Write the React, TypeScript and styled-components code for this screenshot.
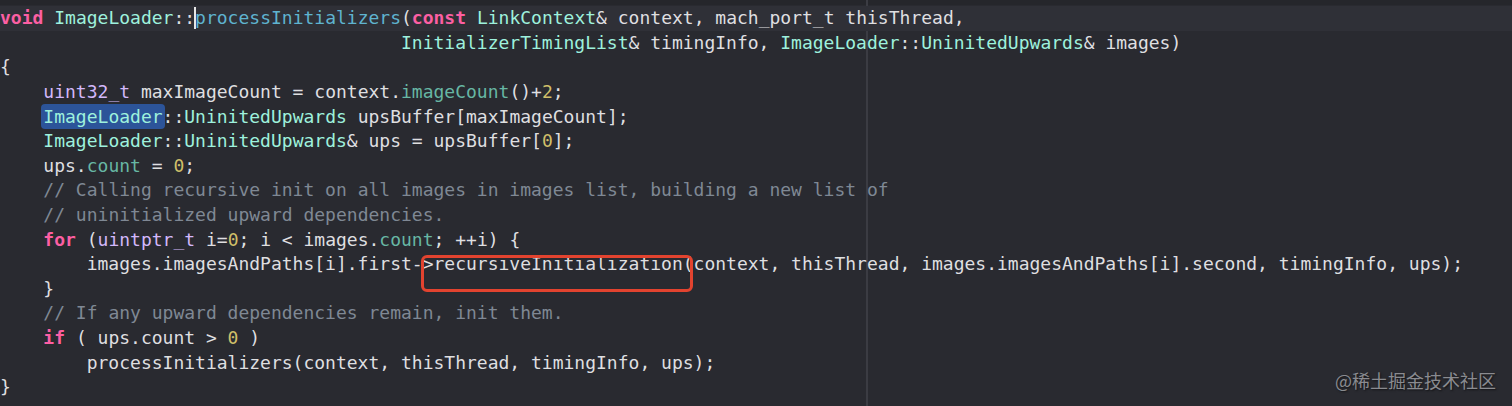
import React from "react";
import styled, { createGlobalStyle } from "styled-components";

const Global = createGlobalStyle`
  html, body { margin: 0; padding: 0; background: #292a30; }
  #root { width: 1512px; height: 406px; }
`;

const Editor = styled.div`
  position: relative;
  display: flex;
  flex-direction: column;
  width: 1512px;
  height: 406px;
  overflow: hidden;
  background: #292a30;
  padding-top: 6.3px;
  box-sizing: border-box;
  font-family: "DejaVu Sans Mono", "Liberation Mono", monospace;
  font-size: 18px;
  color: #dfdfe0;
  &::before {
    content: "";
    position: absolute;
    left: 0;
    right: 0;
    top: 0;
    height: 5px;
    background: #25262b;
  }
`;

const Guide = styled.div`
  position: absolute;
  top: 0;
  bottom: 0;
  left: calc(80ch - 1px);
  width: 2px;
  background: #3b3c43;
  pointer-events: none;
`;

const Line = styled.div<{ $current?: boolean }>`
  position: relative;
  flex: 0 0 24.6px;
  line-height: 24.6px;
  white-space: pre;
  background: ${(p) => (p.$current ? "#2f3037" : "transparent")};
`;

type Kind = "p" | "kw" | "ty" | "decl" | "mem" | "ot" | "num" | "cm";

const colors: Record<Kind, string> = {
  p: "#dfdfe0",
  kw: "#fc5fa3",
  ty: "#9ef1dd",
  decl: "#5fb4d0",
  mem: "#67b7a4",
  ot: "#d3b8fb",
  num: "#d0bf69",
  cm: "#7f8894",
};

const Tok = styled.span<{ $k: Kind }>`
  color: ${(p) => colors[p.$k]};
  font-weight: ${(p) => (p.$k === "kw" ? 700 : 400)};
`;

const Selection = styled.span`
  background: #2c5499;
  border-radius: 4px;
  padding: 2px 2px;
  margin: 0 -2px;
`;

const Caret = styled.span`
  display: inline-block;
  width: 0;
  height: 22px;
  border-left: 2px solid #e6e6e6;
  margin-left: -1px;
  margin-right: -1px;
  vertical-align: -5px;
`;

const Annotation = styled.span`
  position: absolute;
  left: calc(39ch - 2px);
  top: 2.5px;
  width: 272px;
  height: 37px;
  border: 3px solid #e2432f;
  border-radius: 6px;
  box-sizing: border-box;
  pointer-events: none;
`;

const Watermark = styled.div`
  position: absolute;
  right: 16px;
  bottom: 13px;
  font-family: "Noto Sans CJK SC", "Noto Sans", sans-serif;
  font-size: 18px;
  color: #8a8b90;
  text-shadow: 1px 1px 2px rgba(0, 0, 0, 0.6);
`;

type T = [Kind, string];

const lines: T[][] = [
  [["kw", "void"], ["p", " "], ["ty", "ImageLoader"], ["p", "::"], ["decl", "processInitializers"], ["p", "("], ["kw", "const"], ["p", " "], ["ty", "LinkContext"], ["p", "& context, mach_port_t thisThread,"]],
  [["p", "                                     "], ["ty", "InitializerTimingList"], ["p", "& timingInfo, "], ["ty", "ImageLoader"], ["p", "::"], ["ty", "UninitedUpwards"], ["p", "& images)"]],
  [["p", "{"]],
  [["p", "    "], ["ot", "uint32_t"], ["p", " maxImageCount = context."], ["mem", "imageCount"], ["p", "()+"], ["num", "2"], ["p", ";"]],
  [["p", "    "], ["ty", "ImageLoader"], ["p", "::"], ["ty", "UninitedUpwards"], ["p", " upsBuffer[maxImageCount];"]],
  [["p", "    "], ["ty", "ImageLoader"], ["p", "::"], ["ty", "UninitedUpwards"], ["p", "& ups = upsBuffer["], ["num", "0"], ["p", "];"]],
  [["p", "    ups."], ["mem", "count"], ["p", " = "], ["num", "0"], ["p", ";"]],
  [["p", "    "], ["cm", "// Calling recursive init on all images in images list, building a new list of"]],
  [["p", "    "], ["cm", "// uninitialized upward dependencies."]],
  [["p", "    "], ["kw", "for"], ["p", " ("], ["ot", "uintptr_t"], ["p", " i="], ["num", "0"], ["p", "; i < images."], ["mem", "count"], ["p", "; ++i) {"]],
  [["p", "        images.imagesAndPaths[i].first->recursiveInitialization(context, thisThread, images.imagesAndPaths[i].second, timingInfo, ups);"]],
  [["p", "    }"]],
  [["p", "    "], ["cm", "// If any upward dependencies remain, init them."]],
  [["p", "    "], ["kw", "if"], ["p", " ( ups.count > "], ["num", "0"], ["p", " )"]],
  [["p", "        processInitializers(context, thisThread, timingInfo, ups);"]],
  [["p", "}"]],
];

function renderLine(tokens: T[], idx: number) {
  if (idx === 0) {
    return tokens.map(([k, t], i) => (
      <React.Fragment key={i}>
        {k === "decl" && <Caret />}
        <Tok $k={k}>{t}</Tok>
      </React.Fragment>
    ));
  }
  if (idx === 4) {
    return tokens.map(([k, t], i) =>
      i === 1 ? (
        <Selection key={i}>
          <Tok $k={k}>{t}</Tok>
        </Selection>
      ) : (
        <Tok key={i} $k={k}>
          {t}
        </Tok>
      )
    );
  }
  return tokens.map(([k, t], i) => (
    <Tok key={i} $k={k}>
      {t}
    </Tok>
  ));
}

export default function App() {
  return (
    <>
      <Global />
      <Editor>
        <Guide />
        {lines.map((l, i) => (
          <Line key={i} $current={i === 0}>
            {renderLine(l, i)}
            {i === 10 && <Annotation />}
          </Line>
        ))}
        <Watermark>@稀土掘金技术社区</Watermark>
      </Editor>
    </>
  );
}
